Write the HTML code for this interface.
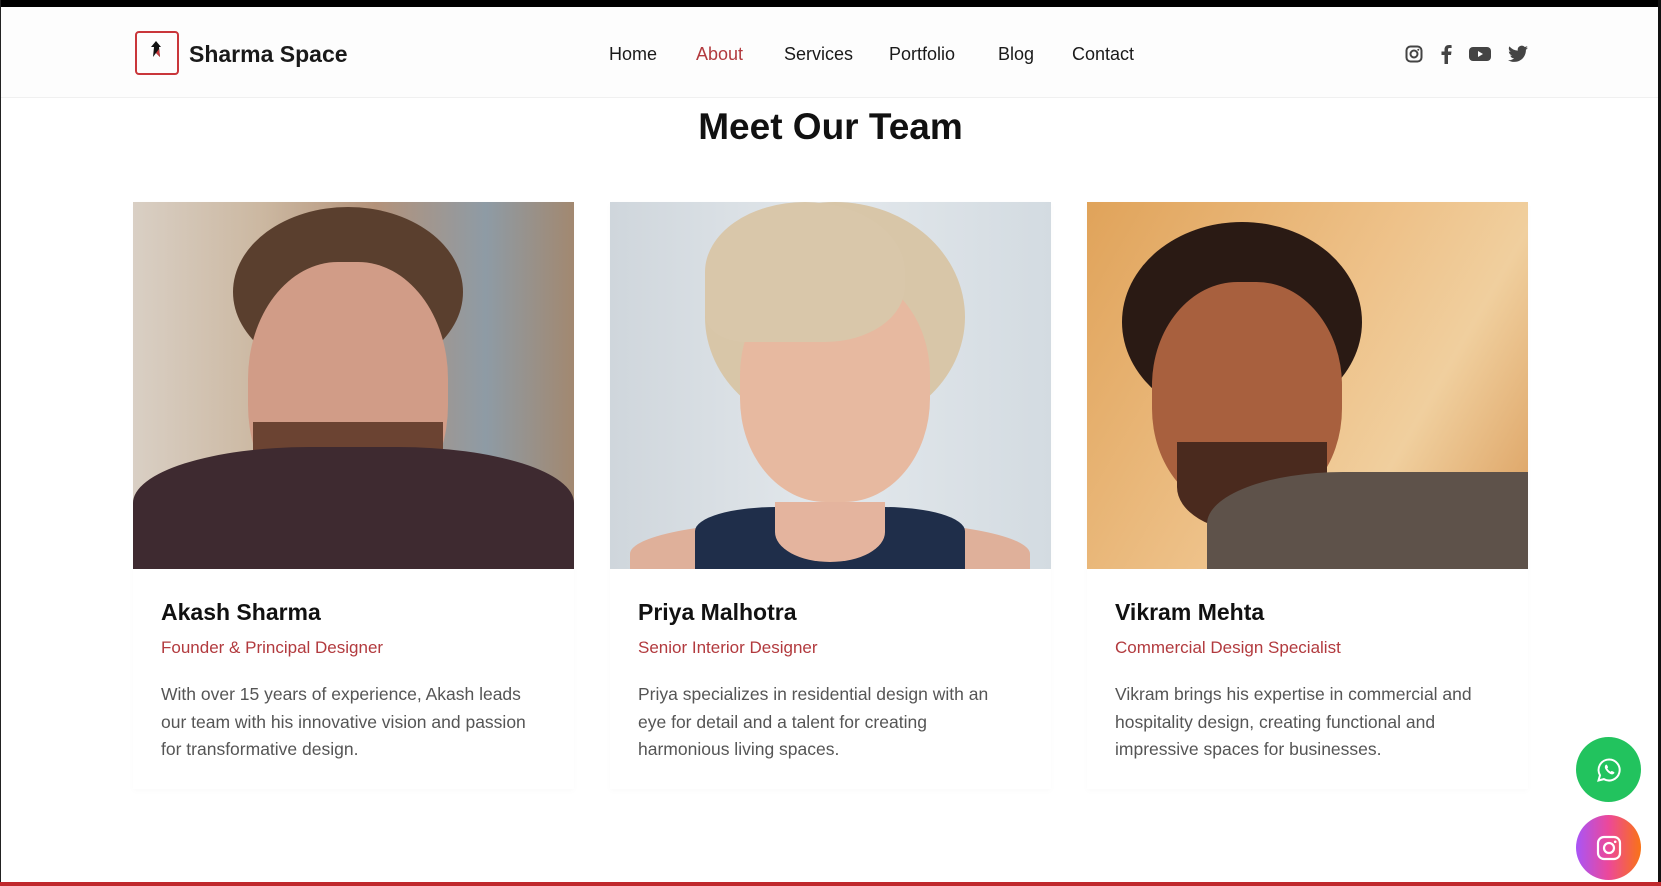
<!DOCTYPE html>
<html><head><meta charset="utf-8"><style>
*{margin:0;padding:0;box-sizing:border-box}
body{width:1661px;height:886px;overflow:hidden;background:#fff;font-family:"Liberation Sans",sans-serif;position:relative}
.topbar{position:absolute;left:0;top:0;width:1661px;height:7px;background:#000}
.rb{position:absolute;right:0;top:0;width:3px;height:886px;background:#111}
.lb{position:absolute;left:0;top:0;width:1px;height:886px;background:#222}
.bot{position:absolute;left:0;bottom:0;width:1661px;height:4px;background:#c0282c}
header{position:absolute;left:1px;top:7px;width:1657px;height:91px;background:#fdfdfd;border-bottom:1px solid #f0f0f0}
.logo{position:absolute;left:134px;top:24px;width:44px;height:44px;border:2px solid #c9363a;border-radius:4px}
.brand{position:absolute;left:188px;top:34px;font-size:23px;font-weight:bold;color:#1a1a1a}
.nav a{position:absolute;top:37px;font-size:18px;color:#1a1a1a;text-decoration:none}
.soc{position:absolute;top:38px}
h2{position:absolute;top:106px;width:1661px;text-align:center;font-size:37px;font-weight:bold;color:#111}
.card{position:absolute;top:202px;width:441px;height:587px;background:#fff;box-shadow:0 2px 6px rgba(0,0,0,.025)}
.img{height:367px;position:relative;overflow:hidden}
.name{position:absolute;left:28px;top:397px;font-size:23px;font-weight:bold;color:#111}
.role{position:absolute;left:28px;top:436px;font-size:17px;color:#b23a3e}
.desc{position:absolute;left:28px;top:479px;width:378px;font-size:17.5px;line-height:27.5px;color:#555}
.fb{position:absolute;left:1576px;width:65px;height:65px;border-radius:50%;display:flex;align-items:center;justify-content:center}
</style></head><body>
<div class="topbar"></div>
<header>
<div class="logo"><svg width="40" height="40" viewBox="0 0 40 40"><path d="M14 14 L19 8 L24 14 L22 14 L23 24 L19 20 L16 24 L17 14Z" fill="#111"/><path d="M19 20 L23 24 L22 16Z" fill="#c9363a"/></svg></div>
<div class="brand">Sharma Space</div>
<div class="nav">
<a style="left:608px">Home</a><a style="left:695px;color:#b23a3e">About</a><a style="left:783px">Services</a><a style="left:888px">Portfolio</a><a style="left:997px">Blog</a><a style="left:1071px">Contact</a>
</div>
<svg class="soc" style="left:1404px" width="18" height="18" viewBox="0 0 18 18"><rect x="1.5" y="1.5" width="15" height="15" rx="4" fill="none" stroke="#444" stroke-width="2"/><circle cx="9" cy="9" r="3.5" fill="none" stroke="#444" stroke-width="2"/><circle cx="13.3" cy="4.7" r="1" fill="#444"/></svg>
<svg class="soc" style="left:1438px" width="14" height="19" viewBox="0 0 14 19"><path d="M9 19V10h3l.5-3.5H9V4.5C9 3.5 9.3 3 10.5 3H12.6V0.2C12 .1 11 0 10 0 7.3 0 5.5 1.6 5.5 4.6V6.5H2.5V10h3v9z" fill="#444"/></svg>
<svg class="soc" style="left:1468px" width="22" height="18" viewBox="0 0 22 18"><rect x="0" y="2" width="22" height="14" rx="4" fill="#444"/><path d="M9 6l5 3-5 3z" fill="#fff"/></svg>
<svg class="soc" style="left:1507px" width="20" height="18" viewBox="0 0 24 20"><path d="M24 2.4a10 10 0 0 1-2.8.8A5 5 0 0 0 23.3.4a10 10 0 0 1-3.1 1.2A4.9 4.9 0 0 0 11.8 6 14 14 0 0 1 1.7.9a4.9 4.9 0 0 0 1.5 6.6A4.9 4.9 0 0 1 1 6.9a4.9 4.9 0 0 0 3.900 4.8 5 5 0 0 1-2.2.1 4.9 4.9 0 0 0 4.6 3.4A9.9 9.9 0 0 1 0 17.3 14 14 0 0 0 7.5 19.5c9.1 0 14-7.5 14-14v-.6A10 10 0 0 0 24 2.4z" fill="#444"/></svg>
</header>
<h2>Meet Our Team</h2>

<div class="card" style="left:133px">
<div class="img" style="background:linear-gradient(90deg,#d9cfc4 0%,#cbb7a0 30%,#b3927a 55%,#8e9ba5 80%,#a28870 100%)">
<div style="position:absolute;left:100px;top:5px;width:230px;height:170px;border-radius:50%;background:#5a3f2e"></div>
<div style="position:absolute;left:115px;top:60px;width:200px;height:260px;border-radius:45%;background:#d19c87"></div>
<div style="position:absolute;left:120px;top:220px;width:190px;height:110px;border-radius:0 0 50% 50%;background:#6b4332"></div>
<div style="position:absolute;left:0;top:245px;width:441px;height:140px;border-radius:40% 40% 0 0;background:#3e2a30"></div>
</div>
<div class="name">Akash Sharma</div>
<div class="role">Founder &amp; Principal Designer</div>
<div class="desc">With over 15 years of experience, Akash leads our team with his innovative vision and passion for transformative design.</div>
</div>

<div class="card" style="left:610px">
<div class="img" style="background:linear-gradient(90deg,#cfd6dc,#e3e8ec 50%,#d3dbe1)">
<div style="position:absolute;left:95px;top:0;width:260px;height:230px;border-radius:50%;background:#d8c6a8"></div>
<div style="position:absolute;left:130px;top:70px;width:190px;height:230px;border-radius:45%;background:#e7b9a0"></div>
<div style="position:absolute;left:95px;top:0;width:200px;height:140px;border-radius:50% 50% 40% 20%;background:#d9c7aa"></div>
<div style="position:absolute;left:20px;top:320px;width:400px;height:80px;border-radius:40% 40% 0 0;background:#dfb09a"></div>
<div style="position:absolute;left:85px;top:305px;width:270px;height:80px;border-radius:30% 30% 0 0;background:#1f2e4a"></div>
<div style="position:absolute;left:165px;top:300px;width:110px;height:60px;border-radius:0 0 50% 50%;background:#e4b49e"></div>
</div>
<div class="name">Priya Malhotra</div>
<div class="role">Senior Interior Designer</div>
<div class="desc">Priya specializes in residential design with an eye for detail and a talent for creating harmonious living spaces.</div>
</div>

<div class="card" style="left:1087px">
<div class="img" style="background:linear-gradient(120deg,#e0a35a,#eec28a 50%,#f0cf9e 70%,#d99a58)">
<div style="position:absolute;left:35px;top:20px;width:240px;height:200px;border-radius:50%;background:#2a1a14"></div>
<div style="position:absolute;left:65px;top:80px;width:190px;height:230px;border-radius:45%;background:#a8603e"></div>
<div style="position:absolute;left:90px;top:240px;width:150px;height:90px;border-radius:0 0 50% 50%;background:#4a2a1e"></div>
<div style="position:absolute;left:120px;top:270px;width:340px;height:130px;border-radius:40% 0 0 0;background:#5e524a"></div>
</div>
<div class="name">Vikram Mehta</div>
<div class="role">Commercial Design Specialist</div>
<div class="desc">Vikram brings his expertise in commercial and hospitality design, creating functional and impressive spaces for businesses.</div>
</div>

<div class="fb" style="top:737px;background:#22c35e"><svg width="26" height="26" viewBox="0 0 26 26"><path d="M13 2.5a10.5 10.5 0 0 0-9 15.8L2.5 23.5l5.4-1.4A10.5 10.5 0 1 0 13 2.5z" fill="none" stroke="#fff" stroke-width="2"/><path d="M9.5 8c.5-.5 1.2-.5 1.5 0l1 2c.2.5-.4 1-.8 1.4.8 1.5 2 2.6 3.4 3.4.4-.4.9-1 1.4-.8l2 1c.5.3.5 1 0 1.5-1 1-2.2 1.2-3.6.5-2.2-1.100-4-3-5.1-5.100-.7-1.4-.6-2.800.2-3.900z" fill="#fff"/></svg></div>
<div class="fb" style="top:815px;background:linear-gradient(90deg,#a855f7,#ec4899 50%,#f97316)"><svg width="26" height="26" viewBox="0 0 26 26"><rect x="2" y="2" width="22" height="22" rx="6" fill="none" stroke="#fff" stroke-width="2.2"/><circle cx="13" cy="13" r="5" fill="none" stroke="#fff" stroke-width="2.2"/><circle cx="19.2" cy="6.8" r="1.3" fill="#fff"/></svg></div>

<div class="lb"></div><div class="rb"></div><div class="bot"></div>
</body></html>
